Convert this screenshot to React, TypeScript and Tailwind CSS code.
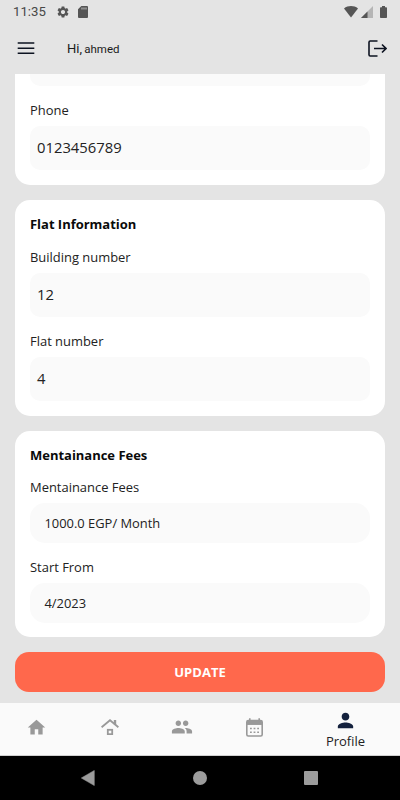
import React from 'react';
import { MdGroup, MdHome, MdPerson, MdSettings } from 'react-icons/md';

const StatusBar: React.FC = () => (
    <div className="flex items-center h-[22px] pt-px pl-[13px] pr-[13px] text-[#555555]">
        <span className="w-[44px] font-['Roboto',sans-serif] text-[13.2px] leading-[22px] text-[#484848] whitespace-nowrap">11:35</span>
        <MdSettings className="w-[14px] h-[14px] -ml-px" />
        <svg className="w-[10px] h-[12px] ml-[8px]" viewBox="0 0 10 12">
            <path d="M3.3 0H9a1 1 0 0 1 1 1v10a1 1 0 0 1-1 1H1a1 1 0 0 1-1-1V3.3z" fill="currentColor" />
            <path d="M4 1.5v2M6 1.5v2M8 1.5v2" stroke="#c8c8c8" strokeWidth="1" />
        </svg>
        <svg className="w-[14px] h-[12px] ml-auto" viewBox="0 0 14 12">
            <path d="M0 2.4C4-.8 10-.8 14 2.4L7 11.5z" fill="currentColor" />
        </svg>
        <svg className="w-[12px] h-[12px] ml-[3px]" viewBox="0 0 12 12">
            <path d="M12 0v12H0z" fill="#b5b5b5" />
            <path d="M6.5 5.5V12H0z" fill="currentColor" />
        </svg>
        <svg className="w-[7px] h-[12px] ml-[7px]" viewBox="0 0 7 12">
            <path d="M2 0h3v1.200h1.200q.8 0 .8.8v9.200q0 .8-.8.8H.8Q0 12 0 11.200V2q0-.8.8-.8H2z" fill="currentColor" />
        </svg>
    </div>
);

const Header: React.FC = () => (
    <div className="flex items-center h-[52px] pl-[17px] pr-[13px] text-[#0d1321]">
        <svg className="w-[18px] h-[12px]" viewBox="0 0 18 12" stroke="currentColor" strokeWidth="1.600">
            <path d="M.7 1h16.600M.7 6.200h16.600M.7 11.200h16.600" />
        </svg>
        <p className="ml-[32px] pt-[2px] font-['Roboto',sans-serif] text-[13px] text-[#1a1a1a]">
            Hi, <span className="text-[11.5px] -ml-px">ahmed</span>
        </p>
        <svg className="w-[19px] h-[17px] ml-auto" viewBox="0 0 19 17" fill="none" stroke="currentColor" strokeWidth="1.600">
            <path d="M9.500 1H2.200Q1 1 1 2.200v12.600Q1 16 2.200 16h7.300" />
            <path d="M6 8.500h12M14 4.500l4 4-4 4" />
        </svg>
    </div>
);

const CardTitle: React.FC<{ children: React.ReactNode }> = ({ children }) => (
    <h2 className="h-[18px] text-[13px] font-bold leading-[18px] tracking-[-0.02px] text-[#0a0a0a]">{children}</h2>
);

const Field: React.FC<{ label: string; value: string }> = ({ label, value }) => (
    <div>
        <label className="block h-[18px] text-[12.95px] leading-[18px]">{label}</label>
        <div className="flex items-center h-[44px] mt-[7px] pb-px px-[7px] text-[14.8px] bg-[#fafafa] rounded-[10px]">{value}</div>
    </div>
);

const FeeField: React.FC<{ label: string; value: string }> = ({ label, value }) => (
    <div>
        <label className="block h-[18px] text-[12.95px] leading-[18px]">{label}</label>
        <div className="flex items-center h-[40px] mt-[7px] pt-[2px] px-[14.5px] text-[12.9px] bg-[#fafafa] rounded-[15px]">{value}</div>
    </div>
);

const BottomNav: React.FC = () => (
    <nav className="flex items-center h-[53px] bg-[#fafafa] border-b border-[#d0d0d0] text-[#999999]">
        <div className="flex justify-center w-[73px] pb-[4px]">
            <MdHome className="w-[21px] h-[21px]" />
        </div>
        <div className="flex justify-center w-[73px] pb-[5px]">
            <svg className="w-[18px] h-[16px]" viewBox="0 0 18 16" fill="none" stroke="currentColor">
                <path d="M.6 8.200L9 1.200l8.400 7" strokeWidth="1.800" />
                <path d="M14 1v4.500" strokeWidth="2.400" />
                <rect x="6.800" y="10.800" width="4.400" height="4.400" strokeWidth="1.800" />
            </svg>
        </div>
        <div className="flex justify-center w-[72px] pb-[4px]">
            <MdGroup className="w-[22px] h-[22px]" />
        </div>
        <div className="flex justify-center w-[73px] pb-[4px]">
            <svg className="w-[17px] h-[19px]" viewBox="0 0 17 19" fill="none" stroke="currentColor">
                <rect x=".8" y="2.600" width="15.400" height="15.400" rx="1.500" strokeWidth="1.600" />
                <path d="M1 4.700h15" strokeWidth="4.500" />
                <path d="M3.800.3v3M13.200.3v3" strokeWidth="1.600" />
                <path d="M4 10.500h1.800M7.600 10.500h1.800M11.200 10.500H13M4 14.200h1.800M7.600 14.200h1.800M11.200 14.200H13" strokeWidth="1.600" />
            </svg>
        </div>
        <div className="flex flex-col items-center w-[109px] pt-px text-[#14213d]">
            <MdPerson className="w-[23px] h-[23px]" />
            <span className="text-[13px] leading-[18px] text-[#222222]">Profile</span>
        </div>
    </nav>
);

const SystemBar: React.FC = () => (
    <div className="flex items-center h-[44px] pl-[81px] pr-[82px] justify-between bg-black text-[#9c9c9c]">
        <svg className="w-[14px] h-[16px]" viewBox="0 0 14 16">
            <path d="M13.300.4v15.200L.3 8z" fill="currentColor" stroke="currentColor" strokeWidth=".5" strokeLinejoin="round" />
        </svg>
        <div className="w-[14px] h-[14px] rounded-full bg-[#9c9c9c]" />
        <div className="w-[14px] h-[14px] rounded-[1px] bg-[#9c9c9c]" />
    </div>
);

const App: React.FC = () => {
    return (
        <div className="flex flex-col w-[400px] h-[800px] overflow-hidden bg-[#e4e4e4] font-['Open_Sans',sans-serif] text-[#222222]">
            <StatusBar />
            <Header />
            <main className="flex flex-col flex-1 min-h-0 px-[15px]">
                <section className="h-[111px] px-[15px] bg-white rounded-b-[15px]">
                    <div className="h-[12px] mb-[15px] bg-[#fafafa] rounded-b-[10px]" />
                    <Field label="Phone" value="0123456789" />
                </section>

                <section className="h-[216px] mt-[15px] px-[15px] pt-[15px] bg-white rounded-[15px]">
                    <CardTitle>Flat Information</CardTitle>
                    <div className="mt-[15px] space-y-[15px]">
                        <Field label="Building number" value="12" />
                        <Field label="Flat number" value="4" />
                    </div>
                </section>

                <section className="h-[206px] mt-[15px] px-[15px] pt-[15px] bg-white rounded-[15px]">
                    <CardTitle>Mentainance Fees</CardTitle>
                    <div className="mt-[14px] space-y-[15px]">
                        <FeeField label="Mentainance Fees" value="1000.0 EGP/ Month" />
                        <FeeField label="Start From" value="4/2023" />
                    </div>
                </section>

                <button className="h-[40px] mt-[15px] pt-px text-[13px] font-bold text-white bg-[#ff684c] rounded-[14px]">UPDATE</button>
            </main>
            <BottomNav />
            <SystemBar />
        </div>
    );
};

export default App;
